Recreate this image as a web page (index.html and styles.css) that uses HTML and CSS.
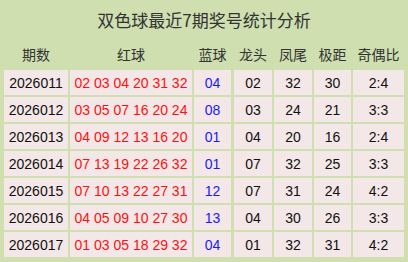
FILE: index.html
```html
<!DOCTYPE html>
<html lang="zh">
<head>
<meta charset="utf-8">
<link rel="stylesheet" href="styles.css">
</head>
<body>
<div class="page">
  <div class="title">双色球最近7期奖号统计分析</div>
  <div class="tables">
    <div class="grid left">
      <div class="hd">期数</div><div class="hd">红球</div><div class="hd">蓝球</div>
      <div class="c">2026011</div><div class="c red">02 03 04 20 31 32</div><div class="c blue">04</div>
      <div class="c">2026012</div><div class="c red">03 05 07 16 20 24</div><div class="c blue">08</div>
      <div class="c">2026013</div><div class="c red">04 09 12 13 16 20</div><div class="c blue">01</div>
      <div class="c">2026014</div><div class="c red">07 13 19 22 26 32</div><div class="c blue">01</div>
      <div class="c">2026015</div><div class="c red">07 10 13 22 27 31</div><div class="c blue">12</div>
      <div class="c">2026016</div><div class="c red">04 05 09 10 27 30</div><div class="c blue">13</div>
      <div class="c">2026017</div><div class="c red">01 03 05 18 29 32</div><div class="c blue">04</div>
    </div>
    <div class="grid right">
      <div class="hd">龙头</div><div class="hd">凤尾</div><div class="hd">极距</div><div class="hd">奇偶比</div>
      <div class="c">02</div><div class="c">32</div><div class="c">30</div><div class="c">2:4</div>
      <div class="c">03</div><div class="c">24</div><div class="c">21</div><div class="c">3:3</div>
      <div class="c">04</div><div class="c">20</div><div class="c">16</div><div class="c">2:4</div>
      <div class="c">07</div><div class="c">32</div><div class="c">25</div><div class="c">3:3</div>
      <div class="c">07</div><div class="c">31</div><div class="c">24</div><div class="c">4:2</div>
      <div class="c">04</div><div class="c">30</div><div class="c">26</div><div class="c">3:3</div>
      <div class="c">01</div><div class="c">32</div><div class="c">31</div><div class="c">4:2</div>
    </div>
  </div>
</div>
</body>
</html>
```
FILE: styles.css
```css
html, body {
  margin: 0;
  padding: 0;
}
body {
  background: #cfdfb0;
  width: 408px;
  height: 262px;
  overflow: hidden;
  font-family: "Liberation Sans", "Noto Sans CJK SC", sans-serif;
}
.page {
  padding: 0 4px;
}
.title {
  height: 40px;
  line-height: 40px;
  text-align: center;
  font-family: "Noto Sans CJK SC", sans-serif;
  font-size: 17px;
  color: #333;
}
.tables {
  display: flex;
  gap: 3px;
}
.grid {
  display: grid;
  grid-template-rows: 28px repeat(7, 25px);
  row-gap: 2px;
  column-gap: 2px;
}
.left {
  grid-template-columns: 64px 122px 37px;
}
.right {
  grid-template-columns: 38px 38px 37px 51px;
}
.hd {
  display: flex;
  align-items: center;
  justify-content: center;
  font-family: "Noto Sans CJK SC", sans-serif;
  font-size: 14px;
  color: #333;
}
.c {
  background: #f3e7e7;
  display: flex;
  align-items: center;
  justify-content: center;
  padding-top: 1px;
  box-sizing: border-box;
  font-size: 14px;
  color: #111;
  white-space: nowrap;
}
.red {
  color: #ff1010;
}
.blue {
  color: #1a1aff;
}
```
